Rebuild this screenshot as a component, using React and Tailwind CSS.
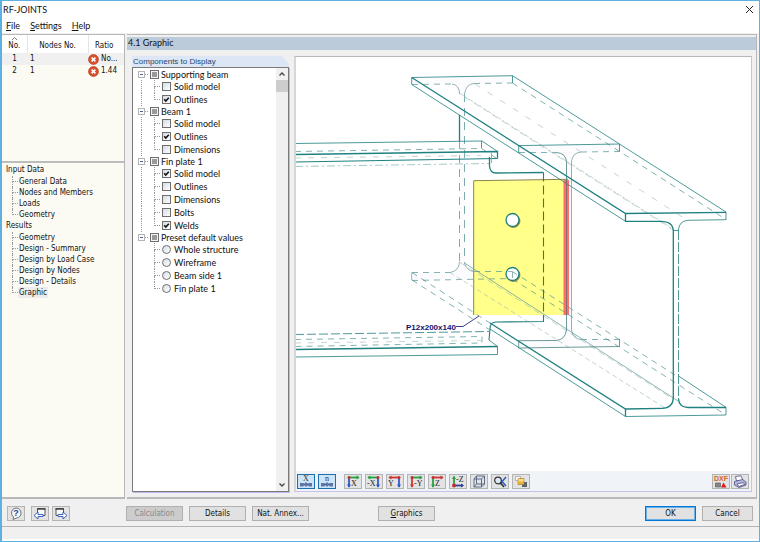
import React, { useEffect, useRef, useState } from 'react';

const results = [
  { no: 1, node: 1, ratio: 'No...' },
  { no: 2, node: 1, ratio: '1.44' },
];

const navigation = [
  { title: 'Input Data', items: ['General Data', 'Nodes and Members', 'Loads', 'Geometry'] },
  {
    title: 'Results',
    items: ['Geometry', 'Design - Summary', 'Design by Load Case', 'Design by Nodes', 'Design - Details', 'Graphic'],
  },
];

const components = [
  { id: 'support', title: 'Supporting beam', items: ['Solid model', 'Outlines'] },
  { id: 'beam', title: 'Beam 1', items: ['Solid model', 'Outlines', 'Dimensions'] },
  { id: 'fin', title: 'Fin plate 1', items: ['Solid model', 'Outlines', 'Dimensions', 'Bolts', 'Welds'] },
  {
    id: 'preset',
    title: 'Preset default values',
    radio: true,
    items: ['Whole structure', 'Wireframe', 'Beam side 1', 'Fin plate 1'],
  },
];

const initialChecked = ['support-Outlines', 'beam-Outlines', 'fin-Solid model', 'fin-Welds'];

const ErrorIcon = () => (
  <svg className="w-[11px] h-[11px] shrink-0" viewBox="0 0 11 11" role="img" aria-label="Failed">
    <circle cx="5.5" cy="5.5" r="5" fill="#d8502c" stroke="#b03a1c" strokeWidth="0.6" />
    <path d="M3.6 3.6l3.8 3.8M7.4 3.6L3.6 7.4" stroke="#fff" strokeWidth="1.6" />
  </svg>
);

const MenuBar = () => (
  <nav className="flex h-[15px] items-center gap-[10px] bg-white pl-[4px] leading-[15px]">
    {['File', 'Settings', 'Help'].map((name) => (
      <button key={name} type="button" className="cursor-default">
        <span className="underline underline-offset-1">{name[0]}</span>
        {name.slice(1)}
      </button>
    ))}
  </nav>
);

const ResultTable = () => (
  <div className="h-[128px] shrink-0 border-b-2 border-[#bdbdbd]">
    <table className="w-full table-fixed border-collapse">
      <thead>
        <tr className="h-[18px] bg-white">
          <th className="w-[25px] border-r border-[#e4e4e4] p-0 font-normal">
            <svg className="mx-auto block h-[4px] w-[7px]" viewBox="0 0 7 4" fill="none" stroke="#777">
              <path d="M1 3l2.5-2.5L6 3" />
            </svg>
            <span className="block leading-[10px]">No.</span>
          </th>
          <th className="w-[61px] border-r border-[#e4e4e4] p-0 pt-[4px] font-normal leading-[10px]">Nodes No.</th>
          <th className="p-0 pr-[4px] pt-[4px] font-normal leading-[10px]">Ratio</th>
        </tr>
      </thead>
      <tbody>
        {results.map((row) => (
          <tr key={row.no} className="h-[12px] first:bg-[#f0f0f0]">
            <td className="p-0 text-center leading-[12px]">{row.no}</td>
            <td className="p-0 pl-[3px] leading-[12px]">{row.node}</td>
            <td className="p-0 leading-[12px]">
              <span className="flex h-[12px] items-center gap-[2px]">
                <ErrorIcon />
                {row.ratio}
              </span>
            </td>
          </tr>
        ))}
      </tbody>
    </table>
  </div>
);

/* Dotted connector in front of a tree entry */
const Branch = ({ last, className }) => (
  <span className={`flex shrink-0 flex-col self-stretch ${className}`}>
    <span className="flex-1 border-b border-l border-dotted border-[#9a9a9a]" />
    <span className={last ? 'flex-1' : 'flex-1 border-l border-dotted border-[#9a9a9a]'} />
  </span>
);

const Navigation = () => {
  const [active, setActive] = useState('Results-Graphic');

  return (
    <nav className="flex-1 pl-[4px] pt-px">
      {navigation.map((group) => (
        <div key={group.title}>
          <div className="h-[12px] leading-[12px]">{group.title}</div>
          <ul>
            {group.items.map((item, i) => {
              const id = `${group.title}-${item}`;
              return (
                <li key={item} className="flex h-[11px] items-center pl-[6px]">
                  <Branch last={i === group.items.length - 1} className="w-[6px]" />
                  <button
                    type="button"
                    onClick={() => setActive(id)}
                    className={`cursor-default px-px leading-[11px] ${active === id ? 'bg-[#ececec]' : ''}`}
                  >
                    {item}
                  </button>
                </li>
              );
            })}
          </ul>
        </div>
      ))}
    </nav>
  );
};

const GroupBox = ({ id, title, onChange }) => {
  const ref = useRef(null);

  useEffect(() => {
    ref.current.indeterminate = true;
  });

  return (
    <label htmlFor={id} className="flex items-center gap-[2px]">
      <input
        ref={ref}
        id={id}
        type="checkbox"
        onChange={onChange}
        className="h-[9px] w-[9px] appearance-none border border-[#6e6e6e] bg-[#9a9a9a] shadow-[inset_0_0_0_1px_#f4f4f4]"
      />
      {title}
    </label>
  );
};

const ComponentTree = () => {
  const [checked, setChecked] = useState(initialChecked);
  const [closed, setClosed] = useState([]);

  const toggle = (list, key) => (list.includes(key) ? list.filter((k) => k !== key) : [...list, key]);

  return (
    <div className="min-w-0 flex-1 pl-[5px] pt-[1px]">
      {components.map((group, g) => {
        const lastGroup = g === components.length - 1;
        const open = !closed.includes(group.id);
        return (
          <div key={group.id}>
            <div className="flex h-[11px] items-center">
              <button
                type="button"
                aria-label={`Toggle ${group.title}`}
                onClick={() => setClosed(toggle(closed, group.id))}
                className="flex h-[7px] w-[7px] items-center justify-center border border-[#b4b4b4] bg-white"
              >
                <span className="h-px w-[3px] bg-[#4a5f9a]" />
              </button>
              <span className="mr-[2px] w-[3px] border-t border-dotted border-[#9a9a9a]" />
              <GroupBox id={group.id} title={group.title} onChange={() => {}} />
            </div>
            {open &&
              group.items.map((item, i) => {
                const key = `${group.id}-${item}`;
                return (
                  <div key={key} className="flex h-[13px] items-center pl-[3px]">
                    <span
                      className={`w-[13px] self-stretch border-l ${
                        lastGroup ? 'border-transparent' : 'border-dotted border-[#9a9a9a]'
                      }`}
                    />
                    <Branch last={i === group.items.length - 1} className="mr-[2px] w-[6px]" />
                    <label htmlFor={key} className="flex items-center gap-[3px]">
                      {group.radio ? (
                        <input
                          id={key}
                          type="radio"
                          name={group.id}
                          className="h-[9px] w-[9px] appearance-none rounded-full border border-[#6e6e6e] bg-linear-to-br from-[#d8dde6] to-white checked:bg-[#555]"
                        />
                      ) : (
                        <span className="grid">
                          <input
                            id={key}
                            type="checkbox"
                            checked={checked.includes(key)}
                            onChange={() => setChecked(toggle(checked, key))}
                            className="peer col-start-1 row-start-1 h-[9px] w-[9px] appearance-none border border-[#6e6e6e] bg-linear-to-br from-[#d5dae3] to-white"
                          />
                          <svg
                            className="pointer-events-none invisible col-start-1 row-start-1 h-[9px] w-[9px] peer-checked:visible"
                            viewBox="0 0 9 9"
                            fill="none"
                            stroke="#111"
                            strokeWidth="1.5"
                          >
                            <path d="M2.2 4.2l1.6 1.9 3-3.4" />
                          </svg>
                        </span>
                      )}
                      {item}
                    </label>
                  </div>
                );
              })}
          </div>
        );
      })}
    </div>
  );
};

const ScrollBar = () => (
  <div className="flex w-[12px] shrink-0 flex-col items-center bg-[#f0f0f0]">
    <svg className="h-[12px] w-[8px]" viewBox="0 0 8 12" fill="none" stroke="#444" strokeWidth="1.3">
      <path d="M1.5 7.5L4 5l2.5 2.5" />
    </svg>
    <span className="h-[12px] w-full bg-[#cdcdcd]" />
    <span className="flex-1" />
    <svg className="h-[12px] w-[8px]" viewBox="0 0 8 12" fill="none" stroke="#444" strokeWidth="1.3">
      <path d="M1.5 4.5L4 7l2.5-2.5" />
    </svg>
  </div>
);

const JointDrawing = () => (
  <svg
    className="min-h-0 w-full flex-1"
    viewBox="296 57 455 414"
    preserveAspectRatio="xMidYMid meet"
    fill="none"
    stroke="#1f8080"
    role="img"
    aria-label="Fin plate joint"
  >
    <path
      d="M459.5 93Q457 84 449 84L412 84V78L512 76V83L474 84Q466 85 464.500 94V263Q466 271 474 271L512 271V278L412 280V273H449Q458 271 459.500 262ZM519 146L619 144V151L581 152Q573 153 571.500 162V330Q573 339 581 339H619V347L519 348V341H556Q565 339 566.500 330V162Q565 152 556 152H519Z"
      fill="#fcfcff"
      stroke="none"
    />
    {/* plate and weld */}
    <path d="M474 181L564 179.500V315H474Z" fill="#ffff8a" stroke="none" />
    <path d="M563.500 180h5.500v135h-5.500z" fill="#ff6e6e" stroke="none" />
    <path d="M473.700 315V180.700L568 179.300" stroke="#8c8448" />
    {/* hidden edges */}
    <g strokeWidth="0.7" strokeDasharray="6 5" stroke="#4d9090">
      <path d="M412 84.500L452 84M474 83.500L512.500 83" />
      <path d="M512.500 83L726 219.500" />
      <path d="M412 272.500H450M474 271.500H512" />
      <path d="M412 280.500L512 278.500" />
      <path d="M412 272.500L490 323M412 280L490 330" />
      <path d="M512.500 271.500L675 375M512.500 279L726 415" />
      <path d="M519 152.500H556M581 152L619.500 151.500" />
      <path d="M581 339.500H619.500" />
      <path d="M295 151.500L481.500 148.500L497.500 159" />
      <path d="M295 339.500L482 336.500V343L295 346.500" />
    </g>
    <path d="M459.500 141V262M464.500 94V263" strokeWidth="0.8" strokeDasharray="8 6" stroke="#5b9797" />
    <g strokeWidth="0.6" stroke="#9bb5b5">
      <path d="M475 84L687 220" strokeDasharray="6 9" />
      <path d="M459.500 93L673 229" strokeDasharray="5 2 2 2" />
      <path d="M464.500 97L678 233" strokeDasharray="6 5" />
      <path d="M450 272.500L665 408" strokeDasharray="5 3" />
      <path d="M459.500 262L673 399" strokeDasharray="7 4" />
      <path d="M295 158L481 155.500M295 343L481 340.500" strokeDasharray="6 7" />
      <path d="M295 166.500L489 163.500" stroke="#6fa3a3" strokeDasharray="8 3 2 3" />
    </g>
    <path d="M464.500 263L678 401" strokeWidth="0.7" stroke="#5b9797" />
    {/* thin edges */}
    <g strokeWidth="0.8">
      <path d="M411.700 77.500L512.500 75.700V83M411.700 77.500V84.500L625.500 221.300" />
      <path d="M512.500 75.700L726 212V219.700L688 220.300Q679 221 678.500 230" />
      <path d="M452 84Q459.500 85 459.500 94M464.500 94Q466 84 474 83.500" stroke="#7a9f9f" />
      <path d="M450 272.500Q459 271 459.500 262M464.500 263Q467 271 474 271.500M411.700 272.500V280" stroke="#7a9f9f" />
      <path d="M518.700 153V145.600L619.500 144V151.500" />
      <path d="M556 152.500Q566 153 566.500 162V330Q565 340 556 340.500L518.700 340.700V348L619.500 346.500V339" stroke="#48807e" />
      <path d="M581 152Q572 153 571.500 162V330Q573 339 581 339.500" stroke="#7a9f9f" />
      <path d="M295 143.500L482 141L497.500 151.500M481.500 141V148.500" />
      <path d="M295 162L497.500 158.500" strokeWidth="1" />
      <path d="M295 334.500L489 331.500" strokeDasharray="9 3" />
      <path d="M295 357L497.500 354.500V346.500L489 340" />
      <path d="M490 329L625.500 416.500L726 415V407.300L678.500 376" />
      <path d="M673 230.500H678.500" />
      <path d="M491.500 153V163" stroke="#7a9f9f" />
      <path d="M678.500 230V399" strokeDasharray="10 2" />
      <path d="M566.500 180V315" stroke="#8a6a66" />
    </g>
    {/* visible edges */}
    <g strokeWidth="1.3">
      <path d="M411.700 77.500L625.500 213.500L726 212.300" />
      <path d="M625.500 213.500V221.300H660Q673 221 673.300 231V398Q673 408 662 408.300L625.500 409L490 323" />
      <path d="M625.500 409V416.500M678.500 399Q679 407 688 407.500H726" />
      <path d="M459.500 115V141" />
      <path d="M295 154.500L497.500 151.500V158.500" />
      <path d="M295 349.500L497.500 346.500" />
      <path d="M489.500 157V166Q490 173 496 173L543.500 172.500" />
      <path d="M543.500 172.500V316" strokeDasharray="9 4" strokeWidth="1.1" />
      <path d="M543.500 315V321.500L496 322Q490 322 490 329L489 340" strokeWidth="1.1" />
    </g>
    <g fill="#fff" strokeWidth="1.3">
      <circle cx="513.500" cy="221" r="6.500" fill="#8c8448" stroke="#8c8448" strokeWidth="0.8" />
      <circle cx="512.500" cy="220" r="6.500" />
      <circle cx="513.500" cy="275" r="6.500" fill="#8c8448" stroke="#8c8448" strokeWidth="0.8" />
      <circle cx="512.500" cy="274" r="6.500" />
    </g>
    <path d="M508 271.500H512.500V278M513 272L517 274.500" stroke="#7a9f9f" strokeWidth="0.8" />
    <path d="M456 326.500H463L479 316" stroke="#26267f" strokeWidth="0.9" />
    <text x="406" y="330" fill="#10106e" stroke="none" className="font-['Liberation_Sans',sans-serif] text-[8px] font-bold">
      P12x200x140
    </text>
  </svg>
);

/* Axis pair with the letter of the view direction */
const AxisIcon = ({ letter, h, v, flip }) => (
  <svg className="h-[13px] w-[14px]" viewBox="0 0 14 13">
    <g transform={flip ? 'translate(14 0) scale(-1 1)' : undefined}>
      <path d="M3 2.500H13" stroke={h} strokeWidth="1.800" />
      <path d="M10.500 .5L13.500 2.500L10.500 4.500z" fill={h} />
      <path d="M3 3V12" stroke={v} strokeWidth="1.800" />
      <path d="M1 9.500L3 12.800L5 9.500z" fill={v} />
      <circle cx="3" cy="2.500" r="1.500" fill="#c03030" />
    </g>
    <text x={flip ? 0 : 5} y="11" fill="#222" className="font-['Liberation_Serif',serif] text-[8px]">
      {letter}
    </text>
  </svg>
);

const DimensionIcon = ({ letter }) => (
  <svg className="h-[13px] w-[14px]" viewBox="0 0 14 13">
    <text x="7" y="6" textAnchor="middle" fill="#334" className="font-['Liberation_Serif',serif] text-[8px]">
      {letter}
    </text>
    <path d="M2 9.500H12" stroke="#4a6294" strokeWidth="2" />
    <path d="M1 8h3.500v3.500H1zM9.500 8H13v3.500H9.500zM6 7.500h2v4H6z" fill="#5c74a6" />
  </svg>
);

const ToolButton = ({ label, active, children }) => (
  <button
    type="button"
    aria-label={label}
    className={`flex h-[15px] w-[18px] shrink-0 items-center justify-center border ${
      active ? 'border-[#1f6fae] bg-[#cce4f7]' : 'border-[#b4b4b4] bg-[#e3e3e3]'
    }`}
  >
    {children}
  </button>
);

const GraphicToolbar = () => (
  <div className="flex h-[20px] shrink-0 items-center justify-between bg-[#f0f4f9] pl-[1px] pr-[2px]">
    <div className="flex items-center gap-[3px]">
      <ToolButton label="Dimensions" active><DimensionIcon letter="X" /></ToolButton>
      <ToolButton label="Numbering" active><DimensionIcon letter="n" /></ToolButton>
      <span className="w-[2px]" />
      <ToolButton label="View in X"><AxisIcon letter="X" h="#27a045" v="#3058c8" /></ToolButton>
      <ToolButton label="View against X"><AxisIcon letter="-X" h="#27a045" v="#3058c8" flip /></ToolButton>
      <ToolButton label="View against Y"><AxisIcon letter="Y" h="#d03434" v="#3058c8" flip /></ToolButton>
      <ToolButton label="View in Y"><AxisIcon letter="-Y" h="#27a045" v="#d03434" /></ToolButton>
      <ToolButton label="View in Z"><AxisIcon letter="Z" h="#d03434" v="#27a045" /></ToolButton>
      <ToolButton label="View against Z">
        <svg className="h-[13px] w-[14px]" viewBox="0 0 14 13">
          <path d="M3 10V2" stroke="#27a045" strokeWidth="1.800" />
          <path d="M1 4L3 .5L5 4z" fill="#27a045" />
          <path d="M3 10.500H12" stroke="#2c3f98" strokeWidth="1.800" />
          <path d="M10 8.500L13 10.500L10 12.500z" fill="#2c3f98" />
          <circle cx="3" cy="10.500" r="2" fill="#c03030" />
          <text x="5" y="7" fill="#222" className="font-['Liberation_Serif',serif] text-[8px]">-Z</text>
        </svg>
      </ToolButton>
      <ToolButton label="Isometric view">
        <svg className="h-[13px] w-[14px]" viewBox="0 0 14 13" fill="none" stroke="#4f5f80">
          <path d="M2 4H9.500V12H2ZM2 4L4.500 1H12.500L9.500 4M12.500 1V9L9.500 12M4.500 1V9H12.500M4.500 9L2 12" strokeWidth="0.9" />
        </svg>
      </ToolButton>
      <ToolButton label="Show all">
        <svg className="h-[13px] w-[14px]" viewBox="0 0 14 13" fill="none">
          <path d="M6 3L13 11M13 2L7 9" stroke="#3560c0" strokeWidth="1.600" />
          <circle cx="5" cy="5.500" r="3.300" fill="#dce9f7" stroke="#333" strokeWidth="1.200" />
          <path d="M7.500 8L11 12" stroke="#333" strokeWidth="1.600" />
        </svg>
      </ToolButton>
      <ToolButton label="Layers">
        <svg className="h-[13px] w-[14px]" viewBox="0 0 14 13">
          <path d="M1.500 1.500h5v4h-5z" fill="#fff" stroke="#999" strokeWidth="0.7" />
          <path d="M8 7h5v5H8z" fill="#5b6470" />
          <path d="M4 3.500h6v6H4z" fill="#e8b63c" stroke="#a87e1e" strokeWidth="0.6" />
          <path d="M4.500 4h5v2.500h-5z" fill="#f8dc8c" />
        </svg>
      </ToolButton>
    </div>
    <div className="flex items-center gap-px">
      <ToolButton label="Export DXF">
        <svg className="h-[13px] w-[16px]" viewBox="0 0 16 13">
          <text x="8" y="6" textAnchor="middle" fill="#d2642a" className="font-['Liberation_Sans',sans-serif] text-[7px] font-bold">
            DXF
          </text>
          <path d="M2.500 8h5v4h-5z" fill="#888" stroke="#555" strokeWidth="0.6" />
          <path d="M8 12.500L10.500 7.500L13.500 12.500z" fill="#e01818" />
        </svg>
      </ToolButton>
      <ToolButton label="Print">
        <svg className="h-[13px] w-[14px]" viewBox="0 0 14 13" stroke="#4c4c84" strokeWidth="0.8">
          <path d="M3.500 6L2.500 1.500L8 .8L10 5.500z" fill="#fff" />
          <path d="M1.500 6.500L9.500 4.500L13 7V10L6 12.500L1.500 10z" fill="#b4b8de" />
          <path d="M4 9L10.500 7.500L11.500 9.500L6 11.500z" fill="#fff" />
        </svg>
      </ToolButton>
    </div>
  </div>
);

const DialogButton = ({ wide = true, primary, ...props }) => (
  <button
    type="button"
    className={`h-[15px] shrink-0 border bg-[#e1e1e1] leading-[13px] disabled:bg-[#cccccc] disabled:text-[#8a8a8a] ${
      wide ? 'w-[57px]' : 'w-[51px]'
    } ${primary ? 'border-[#0078d7] shadow-[inset_0_0_0_1px_#6ab0e8]' : 'border-[#b0b0b0]'}`}
    {...props}
  />
);

const Footer = () => (
  <footer className="flex h-[27px] shrink-0 items-center pl-[5px] pr-[6px] pt-px font-['DejaVu_Sans_Condensed','DejaVu_Sans',sans-serif] text-[8px]">
    <div className="flex w-[119px] shrink-0 items-center">
      <ToolButton label="Help">
        <svg className="h-[13px] w-[14px]" viewBox="0 0 14 13">
          <path d="M7 1a5 5 0 015 5 4.800 4.800 0 01-4.500 5L4 12.500L4.500 10A5 5 0 017 1z" fill="#f4f6fc" stroke="#666" strokeWidth="0.9" />
          <text x="7" y="9" textAnchor="middle" fill="#26468c" className="font-['Liberation_Sans',sans-serif] text-[9px] font-bold">?</text>
        </svg>
      </ToolButton>
      <span className="w-[6px]" />
      <ToolButton label="Previous">
        <svg className="h-[13px] w-[14px]" viewBox="0 0 14 13">
          <path d="M4.500 1.500h7.500v7H4.500z" fill="#f8f8f8" stroke="#555" />
          <path d="M4 2h8.500" stroke="#444" strokeWidth="1.500" />
          <path d="M1 8.500L5 5V7.500H10V9.500H5V12z" fill="#fff" stroke="#2c57b4" strokeWidth="0.9" />
        </svg>
      </ToolButton>
      <span className="w-[3px]" />
      <ToolButton label="Next">
        <svg className="h-[13px] w-[14px]" viewBox="0 0 14 13">
          <path d="M2 1.500h7.500v7H2z" fill="#f8f8f8" stroke="#555" />
          <path d="M1.500 2H10" stroke="#444" strokeWidth="1.500" />
          <path d="M13 8.500L9 5V7.500H4V9.500H9V12z" fill="#fff" stroke="#2c57b4" strokeWidth="0.9" />
        </svg>
      </ToolButton>
    </div>
    <div className="flex gap-[6px]">
      <DialogButton disabled>Calculation</DialogButton>
      <DialogButton>Details</DialogButton>
      <DialogButton>Nat. Annex...</DialogButton>
    </div>
    <div className="ml-[69px]">
      <DialogButton>
        <span className="underline">G</span>raphics
      </DialogButton>
    </div>
    <div className="ml-auto flex gap-[6px]">
      <DialogButton wide={false} primary>OK</DialogButton>
      <DialogButton wide={false}>Cancel</DialogButton>
    </div>
  </footer>
);

const App = () => (
  <div className="flex h-screen min-h-[420px] flex-col border border-l-2 border-[#5cb0e2] bg-[#f0f0f0] font-['Lato',sans-serif] text-[9px] text-[#111]">
    <header className="flex h-[17px] shrink-0 items-center justify-between bg-white pl-px pr-[5px]">
      <h1 className="leading-[17px]">RF-JOINTS</h1>
      <button type="button" aria-label="Close">
        <svg className="h-[9px] w-[9px]" viewBox="0 0 9 9" stroke="#222">
          <path d="M1 1l7 7M8 1L1 8" />
        </svg>
      </button>
    </header>
    <MenuBar />

    <main className="flex min-h-0 flex-1 gap-[2px] pt-px">
      <aside className="flex w-[123px] shrink-0 flex-col border-b-2 border-r border-t border-[#b8b8b8] bg-[#fbfbf4] font-['DejaVu_Sans_Condensed','DejaVu_Sans',sans-serif] text-[8px]">
        <ResultTable />
        <Navigation />
      </aside>

      <section className="mr-[2px] flex min-w-0 flex-1 flex-col border-b-2 border-r border-t border-[#b8b8b8] pt-[2px]">
        <h2 className="h-[13px] shrink-0 bg-[#bccbd9] pl-[1px] leading-[12px]">4.1 Graphic</h2>
        <div className="flex min-h-0 flex-1 gap-[5px] pb-[5px] pl-[5px] pr-[4px] pt-[6px]">
          <div className="flex w-[157px] shrink-0 flex-col">
            <h3 className="h-[11px] shrink-0 bg-[#dce6f4] pl-px font-['Liberation_Sans',sans-serif] text-[8px] leading-[12px] text-[#24466e] [clip-path:polygon(0_0,150px_0,100%_8px,100%_100%,0_100%)]">
              Components to Display
            </h3>
            <div className="flex min-h-0 flex-1 border border-[#7a7a7a] bg-white shadow-[1px_1px_0_#b9b9ea]">
              <ComponentTree />
              <ScrollBar />
            </div>
          </div>
          <div className="flex min-w-0 flex-1 flex-col border-b border-l-2 border-r border-t border-[#c4c4ea] border-l-[#d6d6d6] border-t-[#b8b8b8] bg-white">
            <JointDrawing />
            <GraphicToolbar />
          </div>
        </div>
      </section>
    </main>

    <Footer />
    <div className="h-[15px] shrink-0 border-b-2 border-t border-b-white border-t-[#b4b4b4]" />
  </div>
);

export default App;
